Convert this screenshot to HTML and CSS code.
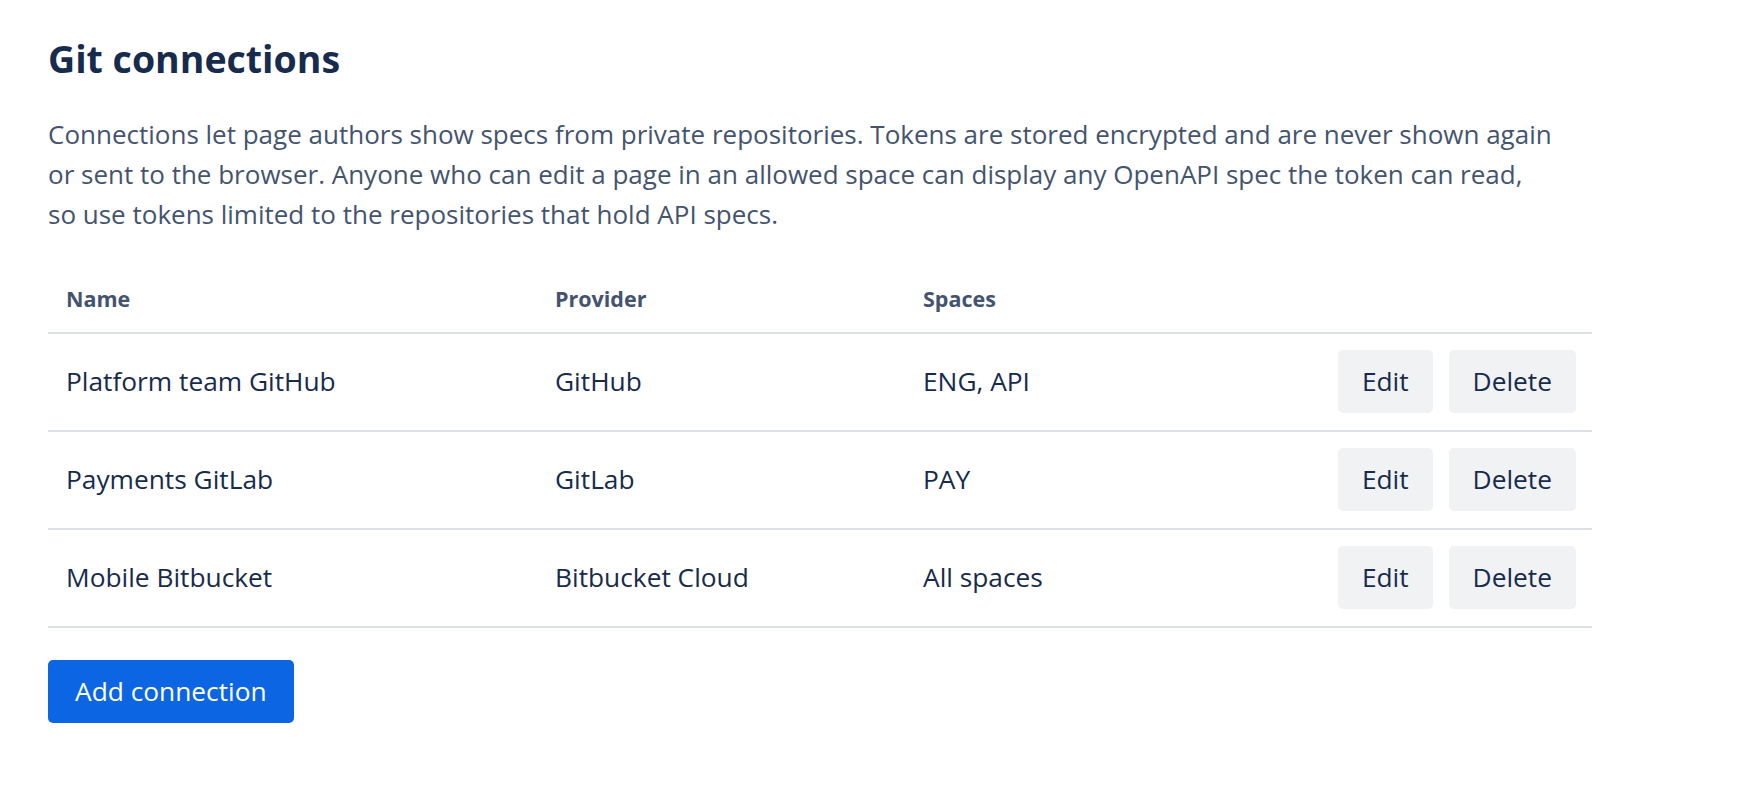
FILE: index.html
```html
<!DOCTYPE html>
<html lang="en">
<head>
  <meta charset="UTF-8" />
  <meta name="viewport" content="width=device-width, initial-scale=1" />
  <title>Git connections</title>
  <link rel="stylesheet" href="styles.css">
</head>
<body>

<main class="page">
  <h1>Git connections</h1>
  <p class="intro">
    Connections let page authors show specs from private repositories. Tokens are stored encrypted and are never shown again
    or sent to the browser. Anyone who can edit a page in an allowed space can display any OpenAPI spec the token can read,
    so&nbsp;use tokens limited to the repositories that hold API specs.
  </p>

  <table class="connections">
    <colgroup>
      <col class="col-name">
      <col class="col-provider">
      <col>
      <col class="col-actions">
    </colgroup>
    <thead>
      <tr>
        <th>Name</th>
        <th>Provider</th>
        <th>Spaces</th>
        <th></th>
      </tr>
    </thead>
    <tbody>
      <tr>
        <td>Platform team GitHub</td>
        <td>GitHub</td>
        <td>ENG, API</td>
        <td>
          <div class="row-actions">
            <button class="btn-subtle">Edit</button>
            <button class="btn-subtle">Delete</button>
          </div>
        </td>
      </tr>
      <tr>
        <td>Payments GitLab</td>
        <td>GitLab</td>
        <td>PAY</td>
        <td>
          <div class="row-actions">
            <button class="btn-subtle">Edit</button>
            <button class="btn-subtle">Delete</button>
          </div>
        </td>
      </tr>
      <tr>
        <td>Mobile Bitbucket</td>
        <td>Bitbucket Cloud</td>
        <td>All spaces</td>
        <td>
          <div class="row-actions">
            <button class="btn-subtle">Edit</button>
            <button class="btn-subtle">Delete</button>
          </div>
        </td>
      </tr>
    </tbody>
  </table>

  <button class="btn-primary">Add connection</button>
</main>

</body>
</html>
```

FILE: styles.css
```css
* { box-sizing: border-box; margin: 0; padding: 0; }
body {
  font-family: "Segoe UI", "Open Sans", "Noto Sans", sans-serif;
  background: #fff;
  color: #172b4d;
}
.page {
  padding: 37px 48px 40px;
}
h1 {
  font-size: 37.5px;
  line-height: 44px;
  font-weight: 700;
  color: #172b4d;
  margin-bottom: 33px;
}
.intro {
  font-size: 26px;
  line-height: 40px;
  color: #44546f;
  max-width: 1512px;
}

/* connections table */
.connections {
  width: 1544px;
  table-layout: fixed;
  border-collapse: collapse;
  margin-top: 33px;
}
.col-name { width: 489px; }
.col-provider { width: 368px; }
.col-actions { width: 272px; }
.connections th {
  font-size: 21.5px;
  line-height: 28px;
  font-weight: 700;
  color: #44546f;
  text-align: left;
  padding: 18px 18px 19px;
  border-bottom: 2px solid #dcdfe4;
}
.connections td {
  font-size: 26.3px;
  line-height: 35px;
  color: #172b4d;
  padding: 16px 16px 17px 18px;
  border-bottom: 2px solid #dcdfe4;
  vertical-align: middle;
}
.row-actions {
  display: flex;
  justify-content: flex-end;
  gap: 16px;
}

/* buttons */
.btn-subtle, .btn-primary {
  font-family: inherit;
  font-size: 26.3px;
  line-height: 35px;
  border: none;
  border-radius: 5px;
  cursor: pointer;
}
.btn-subtle {
  background: #f1f2f4;
  color: #172b4d;
  padding: 14px 24px;
}
.btn-subtle:hover {
  background: #dcdfe4;
}
.btn-primary {
  display: block;
  margin-top: 32px;
  background: #0c66e4;
  color: #fff;
  padding: 14px 27px;
}
.btn-primary:hover {
  background: #0055cc;
}
```
